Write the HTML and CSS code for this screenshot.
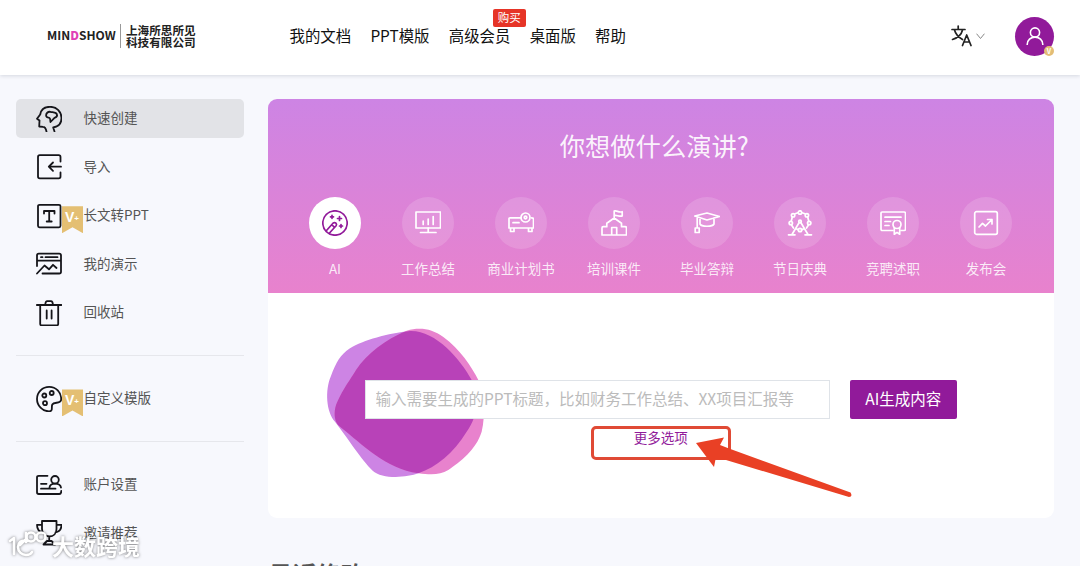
FILE: index.html
```html
<!DOCTYPE html>
<html lang="zh-CN">
<head>
  <meta charset="UTF-8">
  <meta name="viewport" content="width=device-width, initial-scale=1.0">
  <title>MINDSHOW</title>
  <link rel="stylesheet" href="styles.css">
</head>
<body>
  <header>
    <a class="logo" href="#">
      <span class="logo-name">MIN<b>D</b>SHOW</span>
      <span class="logo-company">上海所思所见<br>科技有限公司</span>
    </a>
    <nav>
      <a href="#">我的文档</a>
      <a href="#">PPT模版</a>
      <a href="#" class="vip">高级会员<span class="buy">购买</span></a>
      <a href="#">桌面版</a>
      <a href="#">帮助</a>
    </nav>
    <div class="lang">
      <svg class="lang-icon" viewBox="0 0 22 22"><path d="M1 4.5h13M7.2 1v3.5M3.5 5c1.2 4.500 4.500 7.500 8 9.500M11.500 5C10.500 9.500 6 13 1.500 14.500M11.500 20.500l4.200-10.500 4.300 10.500M13 17h5.500"/></svg>
      <svg class="arrow-down" viewBox="0 0 9 7"><path d="M.8 1l3.700 4.500L8.200 1"/></svg>
    </div>
    <div class="avatar">
      <svg viewBox="0 0 18 18"><circle cx="9" cy="5.500" r="4.600"/><path d="M1.200 17.500c0-4.500 3.500-7.400 7.800-7.400s7.800 2.900 7.800 7.400"/></svg>
      <span class="avatar-badge">V</span>
    </div>
  </header>

  <main>
    <aside>
      <ul>
        <li class="active">
          <svg viewBox="0 0 26 26"><path d="M10.500 25.500C10 23 8.800 20.800 7 20.800L3.200 20.500 3.500 14.500 1 12.700 4.200 8.500C5 3.500 9 .8 14 .8c6.800 0 11.500 5 11.500 11.200 0 4.800-2.500 8.500-8.300 9.500l1.300 4"/><path d="M14.300 5.800c-2.500-.3-4.300 1.500-4.200 3.700.1 1.700 1.500 2.200 3.200 2.300 1.200.3.800 2.200 1.200 4.200l4-4.200c1.800-.5 2.900-1.800 2.500-3.300C20.500 6.300 17.500 6.500 14.300 5.800z"/></svg>
          <a href="#">快速创建</a>
        </li>
        <li>
          <svg viewBox="0 0 26 26"><path d="M24.500 7.500V3q0-1.800-1.800-1.800H3.800Q2 1.200 2 3v19.500q0 1.800 1.800 1.800h18.900q1.800 0 1.800-1.800v-4M25 12.700H13M17 8.500l-4.200 4.200 4.200 4.200"/></svg>
          <a href="#">导入</a>
        </li>
        <li>
          <svg viewBox="0 0 26 26"><rect x="2" y="1.800" width="22.500" height="22.500" rx="1.500"/><path d="M8 10.500V8h10.500v2.500M13.200 8v10.500M10.700 18.500h5"/></svg>
          <span class="plus">V<i>+</i></span>
          <a href="#">长文转PPT</a>
        </li>
        <li>
          <svg viewBox="0 0 26 26"><path d="M1 15V4.500Q1 2.700 2.800 2.700h20.400Q25 2.700 25 4.500v16.200q0 1.800-1.800 1.800H6.500M1 9.700h24M5 6.200h1.500M9.500 6.200h12M1 22.500l7.500-8 4.500 3.800 4-4.500 3.500 3.200"/></svg>
          <a href="#">我的演示</a>
        </li>
        <li>
          <svg viewBox="0 0 26 26"><path d="M.8 5h24.700M4.200 5v19q0 1.300 1.300 1.300h15.400q1.300 0 1.300-1.300V5M9.300 5c0-3 .7-3.800 2-3.800h3.600c1.300 0 2 .8 2 3.800M10.700 10.500v8M15.600 10.500v8"/></svg>
          <a href="#">回收站</a>
        </li>
      </ul>
      <ul>
        <li>
          <svg viewBox="0 0 26 26"><path d="M13.200.9C6.500.9 1 6.200 1 13s5.500 12.300 12 12.300c4.500 0 2-4.300 3.300-6.800 1.700-3.200 8.900 0 8.900-5.300C25.200 6.200 20 .9 13.200.9z"/><circle cx="8.300" cy="9.500" r="2"/><circle cx="15.700" cy="7" r="2"/><circle cx="9" cy="17.200" r="2"/></svg>
          <span class="plus">V<i>+</i></span>
          <a href="#">自定义模版</a>
        </li>
      </ul>
      <ul>
        <li>
          <svg viewBox="0 0 26 26"><path d="M11.500 3.800H2.700Q1 3.800 1 5.500v14.800Q1 22 2.700 22h20.600q2 0 2-3.200M5 11.800h5.500M5 16.700h14.500"/><circle cx="19" cy="7.800" r="3.800"/><path d="M13.500 15.500c.5-3 3-3.800 5.500-3.800s5.500 1.300 6 3.800"/></svg>
          <a href="#">账户设置</a>
        </li>
        <li>
          <svg viewBox="0 0 26 26"><path d="M6 1h14.500v8c0 4.500-3 7.500-7.200 7.500S6 13.500 6 9zM6 4.800H1c0 4 2 7 6 7.500M20.500 4.800h5c0 4-2 7-6 7.500M13.200 16.500v4.500M11 21h4.500l3.500 3.500H7.500z"/></svg>
          <a href="#">邀请推荐</a>
        </li>
      </ul>
    </aside>

    <section class="content">
      <div class="card">
        <div class="banner">
          <h1>你想做什么演讲?</h1>
          <div class="types">
            <a href="#" class="type on">
              <span><svg viewBox="0 0 26 26"><circle cx="13" cy="13" r="12.200"/><path d="M4.500 20.500l6.700-7.500q1.500-1 2.700.2t.2 2.600L7.500 23M9.700 14.700l2.600 2.400M10 5.300v3M8.500 6.800h3M17.500 6.500v4M15.500 8.500h4M19 14.500v3M17.500 16h3"/></svg></span>
              AI
            </a>
            <a href="#" class="type">
              <span><svg viewBox="0 0 26 26"><rect x="1" y="2" width="24.500" height="16"/><path d="M13.200 18v4.500M5.500 22.500h15.500M8.200 14.500V11M13.200 14.500V9M18.200 14.500V6.500"/></svg></span>
              工作总结
            </a>
            <a href="#" class="type">
              <span><svg viewBox="0 0 26 26"><path d="M13 7.800H2Q1 7.800 1 8.800V18h24.500V9q0-1.200-2-1.200M5 12.700h6M2.500 18v3.500H6V18M20.500 18v3.500H24V18"/><circle cx="17.500" cy="7.500" r="4.500"/><circle cx="17.500" cy="7.500" r="1.300"/></svg></span>
              商业计划书
            </a>
            <a href="#" class="type">
              <span><svg viewBox="0 0 26 26"><path d="M1 25v-7q0-1.300 1.300-1.300h3.500v-3.500L13.200 8l7.300 5.200v3.500h3.700q1.300 0 1.300 1.300v7zM10.700 25v-7.500h5V25M13.200 8V1c2.500-1 4.500 2 8 .7V6c-3.500 1-5.500-1.500-8-.5"/></svg></span>
              培训课件
            </a>
            <a href="#" class="type">
              <span><svg viewBox="0 0 26 26"><path d="M.8 6L13 3l12.500 3.500L13 10zM6 7.800V14c1.500 3 12.500 3 14 0V7.800M3.200 7v11M1.200 18h4v4.500h-4z"/></svg></span>
              毕业答辩
            </a>
            <a href="#" class="type">
              <span><svg viewBox="0 0 26 26"><path d="M8 3.700l3-1M15 2.700l3 1M5.300 7l-1 4M20.700 7l1 4M4.500 15l2 3M21.500 15l-2 3"/><circle cx="13" cy="2.500" r="1.700"/><circle cx="19.900" cy="5.300" r="1.700"/><circle cx="6.100" cy="5.300" r="1.700"/><circle cx="3.800" cy="13" r="1.700"/><circle cx="22.200" cy="13" r="1.700"/><circle cx="13" cy="20" r="1.700"/><path d="M12.200 12.500L5 24.500M13.800 12.500L21 24.500M1.500 24.800H8M18 24.800h6.500M9 18.500l2.500 1.500M17 18.500L14.500 20"/><circle cx="13" cy="11.500" r="1.300"/></svg></span>
              节日庆典
            </a>
            <a href="#" class="type">
              <span><svg viewBox="0 0 26 26"><path d="M13 20.500H2.200q-1.200 0-1.200-1.200V3.200Q1 2 2.200 2h22q1.300 0 1.300 1.200v16.100q0 1.200-1.300 1.200H21M5 7.200h16M5 11.500h5.500M5 15.500h4"/><circle cx="17" cy="14.500" r="4"/><path d="M14.300 17.700v6.500l2.700-1.800 2.700 1.800v-6.500"/></svg></span>
              竞聘述职
            </a>
            <a href="#" class="type">
              <span><svg viewBox="0 0 26 26"><rect x="1.700" y="1.700" width="22.600" height="22.600" rx="1.800"/><path d="M6 17l3.500-3.700 3 2.700 6.500-6.500M14.500 9.500H19V14"/></svg></span>
              发布会
            </a>
          </div>
        </div>
        <div class="create">
          <svg class="blob" viewBox="0 0 600 540">
            <defs>
              <clipPath id="blobclip"><path d="M300 48C375 45 450 130 485 195C512 250 500 310 470 350C430 415 380 455 325 475C290 488 215 493 188 467C155 435 110 365 75 320C48 290 45 225 62 185C80 140 90 120 120 100C160 75 235 55 300 48z"/></clipPath>
            </defs>
            <path fill="#cd84e4" d="M300 48C375 45 450 130 485 195C512 250 500 310 470 350C430 415 380 455 325 475C290 488 215 493 188 467C155 435 110 365 75 320C48 290 45 225 62 185C80 140 90 120 120 100C160 75 235 55 300 48z"/>
            <path fill="#e882cd" d="M290 47C330 36 365 41 400 66C450 103 485 155 505 195C520 240 528 300 515 350C498 405 450 440 415 465C390 480 365 480 325 475C225 460 160 390 90 335C70 320 70 285 82 260C100 220 120 195 138 165C170 115 230 72 290 47z"/>
            <path clip-path="url(#blobclip)" fill="#b842b8" d="M290 47C330 36 365 41 400 66C450 103 485 155 505 195C520 240 528 300 515 350C498 405 450 440 415 465C390 480 365 480 325 475C225 460 160 390 90 335C70 320 70 285 82 260C100 220 120 195 138 165C170 115 230 72 290 47z"/>
          </svg>
          <form action="#">
            <input type="text" name="title" placeholder="输入需要生成的PPT标题，比如财务工作总结、XX项目汇报等">
            <button type="button">AI生成内容</button>
          </form>
          <a href="#" class="more">更多选项</a>
          <div class="mark"></div>
          <svg class="pointer" viewBox="0 0 157 62"><path fill="#e94025" d="M0 6L28 .5 24 8 33 11.500 154.500 55.500Q157 60 153 60L30 23 19.500 22.500 18 30z"/></svg>
        </div>
      </div>
      <h2>最近修改</h2>
    </section>
  </main>

  <div class="watermark">
    <svg viewBox="0 0 40 28"><path d="M2 11l4-3v16M19 11C13 9 10 13 10 17c0 5 4 8 8 8 3 0 5-1 6-3M12 15l5-5M18 3v9"/><circle cx="23" cy="7" r="4.500"/><circle cx="33" cy="7" r="4.500"/></svg>
    <span>大数跨境</span>
  </div>
</body>
</html>
```
FILE: styles.css
```css
*{
  box-sizing: border-box;
}
body{
  margin: 0;
  height: 566px;
  overflow: hidden;
  position: relative;
  background-color: #f7f8fd;
  font-family: 'Noto Sans CJK SC', sans-serif;
  font-size: 13.5px;
  color: #555;
}
a{
  text-decoration: none;
  color: inherit;
}
svg{
  display: block;
  fill: none;
  stroke-linecap: round;
  stroke-linejoin: round;
}
header{
  height: 75px;
  padding: 0 26px 3px 47px;
  display: flex;
  align-items: center;
  background-color: #fff;
  box-shadow: 0 1px 4px rgba(0, 21, 41, .14);
}
.logo{
  width: 242.5px;
  display: flex;
  align-items: center;
  color: #222;
  font-weight: bold;
}
.logo-name{
  width: 73px;
  padding-bottom: 2px;
  font-size: 12px;
  line-height: 20px;
  white-space: nowrap;
}
.logo-name b{
  color: #e03fb5;
}
.logo-company{
  padding-left: 5px;
  border-left: 1px solid #999;
  font-size: 11.6px;
  line-height: 12px;
}
nav{
  display: flex;
  gap: 19.3px;
  padding-bottom: 2px;
  font-size: 15.4px;
  line-height: 24px;
  color: #111;
}
.vip{
  position: relative;
}
.buy{
  position: absolute;
  left: 44px;
  top: -14px;
  width: 33px;
  height: 18px;
  border-radius: 2px;
  background-color: #e63427;
  color: #fff;
  font-size: 11.5px;
  line-height: 17px;
  text-align: center;
}
.lang{
  margin-left: auto;
  display: flex;
  align-items: center;
  gap: 3px;
}
.lang-icon{
  width: 22px;
  height: 22px;
  stroke: #222;
  stroke-width: 1.7;
}
.arrow-down{
  width: 9px;
  height: 7px;
  stroke: #888;
}
.avatar{
  position: relative;
  margin-left: 30px;
  width: 39px;
  height: 39px;
  border-radius: 50%;
  background-color: #911a9a;
  display: flex;
  align-items: center;
  justify-content: center;
}
.avatar svg{
  width: 18px;
  height: 18px;
  stroke: #fff;
  stroke-width: 1.6;
}
.avatar-badge{
  position: absolute;
  right: 0;
  bottom: 0;
  width: 10px;
  height: 10px;
  border-radius: 50%;
  background-color: #e3bd76;
  color: #fff;
  font-size: 7px;
  font-weight: bold;
  line-height: 10px;
  text-align: center;
}
main{
  display: flex;
  padding: 24px 26px 0 15.5px;
}
aside{
  width: 228px;
  margin-right: 24px;
}
ul{
  list-style: none;
  margin: 0;
  padding: 0 0 23px;
  display: flex;
  flex-direction: column;
  gap: 9.6px;
}
ul + ul{
  padding-top: 23px;
  border-top: 1px solid #e6e7ec;
}
li{
  position: relative;
  height: 39px;
  padding-left: 20.5px;
  display: flex;
  align-items: center;
  gap: 21.5px;
  border-radius: 5px;
}
li.active{
  background-color: #e2e3e7;
}
li svg{
  width: 26px;
  height: 26px;
  stroke: #15151a;
  stroke-width: 1.8;
}
li a{
  padding-bottom: 3px;
}
.plus{
  position: absolute;
  left: 46.5px;
  top: 10px;
  width: 21px;
  height: 27px;
  padding-left: 3px;
  background-color: #e4bf73;
  clip-path: polygon(0 0, 100% 0, 100% 100%, 50% 78%, 0 100%);
  color: #fff;
  font: bold 14px/22px 'Liberation Sans', sans-serif;
}
.plus i{
  font-size: 8px;
  font-style: normal;
  vertical-align: 1px;
}
.content{
  width: 786.5px;
}
.card{
  height: 418.5px;
  border-radius: 9px;
  overflow: hidden;
  background-color: #fff;
}
.banner{
  height: 193.5px;
  padding: 27px 21px 0;
  background-image: linear-gradient(#cd84e4, #e882cd);
  color: #fff;
}
h1{
  margin: 0 13px 33px 0;
  font-size: 25.3px;
  font-weight: normal;
  line-height: 38px;
  text-align: center;
  color: rgba(255, 255, 255, .92);
}
.types{
  display: flex;
}
.type{
  width: 93px;
  display: flex;
  flex-direction: column;
  align-items: center;
  gap: 8px;
  line-height: 22px;
  color: rgba(255, 255, 255, .85);
}
.type span{
  width: 52px;
  height: 52px;
  border-radius: 50%;
  display: flex;
  align-items: center;
  justify-content: center;
  background-color: rgba(255, 255, 255, .15);
}
.type svg{
  width: 26px;
  height: 26px;
  stroke: #fff;
  stroke-width: 1.7;
}
.type.on span{
  background-color: #fff;
}
.type.on svg{
  stroke: #911a9a;
}
.create{
  position: relative;
  height: 225px;
  padding: 87px 97px 0;
}
.blob{
  position: absolute;
  left: 42.5px;
  top: 22.5px;
  width: 200px;
  height: 180px;
}
form{
  position: relative;
  display: flex;
  gap: 19.5px;
}
input{
  width: 466px;
  height: 39px;
  padding: 0 10px 3px;
  border: 1px solid #dfe3e8;
  background-color: #fff;
  font: 15.5px 'Noto Sans CJK SC', sans-serif;
}
input::placeholder{
  color: #bbb;
}
button{
  width: 107.5px;
  height: 39px;
  padding: 0 0 3px;
  border: 0;
  border-radius: 2px;
  background-color: #911a9a;
  color: #fff;
  font: 15.5px 'Noto Sans CJK SC', sans-serif;
}
.more{
  display: block;
  margin-top: 7.5px;
  line-height: 22px;
  text-align: center;
  color: #911a9a;
}
.mark{
  position: absolute;
  left: 323px;
  top: 133.5px;
  width: 140px;
  height: 34px;
  border: 3px solid #e04a35;
  border-radius: 5px;
}
.pointer{
  position: absolute;
  left: 428.5px;
  top: 144.5px;
  width: 157px;
  height: 62px;
}
h2{
  margin: 38px 0 0;
  padding-left: 1px;
  font-size: 24px;
  line-height: 36px;
  color: #555;
}
.watermark{
  position: absolute;
  left: 8px;
  top: 530px;
  display: flex;
  gap: 4px;
  filter: drop-shadow(0 0 1.5px rgba(0, 0, 0, .5));
}
.watermark svg{
  width: 40px;
  height: 28px;
  stroke: #fff;
  stroke-width: 2.6;
}
.watermark span{
  font-size: 22px;
  font-weight: bold;
  line-height: 30px;
  color: #fff;
}
```
